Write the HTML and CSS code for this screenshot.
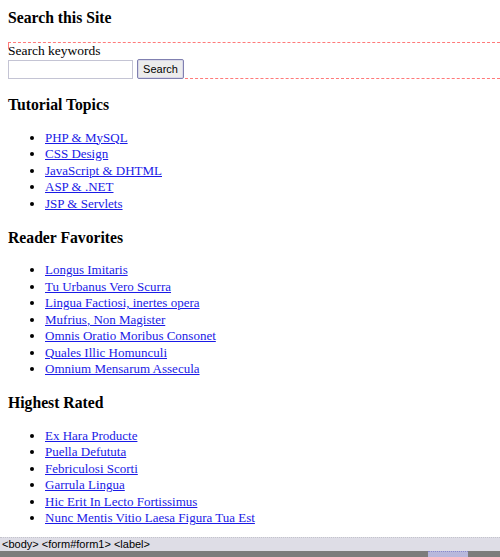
FILE: index.html
```html
<!DOCTYPE html>
<html>
<head>
<meta charset="utf-8">
<link rel="stylesheet" href="styles.css">
</head>
<body>
<main class="page">
  <h3 class="head first">Search this Site</h3>
  <form class="search" id="form1">
    <label class="lbl">Search keywords</label>
    <div class="row">
      <input class="field" type="text">
      <button class="btn" type="button">Search</button>
      <span class="tail"></span>
    </div>
  </form>
  <h3 class="head">Tutorial Topics</h3>
  <ul class="list">
    <li><a href="#">PHP &amp; MySQL</a></li>
    <li><a href="#">CSS Design</a></li>
    <li><a href="#">JavaScript &amp; DHTML</a></li>
    <li><a href="#">ASP &amp; .NET</a></li>
    <li><a href="#">JSP &amp; Servlets</a></li>
  </ul>
  <h3 class="head">Reader Favorites</h3>
  <ul class="list">
    <li><a href="#">Longus Imitaris</a></li>
    <li><a href="#">Tu Urbanus Vero Scurra</a></li>
    <li><a href="#">Lingua Factiosi, inertes opera</a></li>
    <li><a href="#">Mufrius, Non Magister</a></li>
    <li><a href="#">Omnis Oratio Moribus Consonet</a></li>
    <li><a href="#">Quales Illic Homunculi</a></li>
    <li><a href="#">Omnium Mensarum Assecula</a></li>
  </ul>
  <h3 class="head">Highest Rated</h3>
  <ul class="list">
    <li><a href="#">Ex Hara Producte</a></li>
    <li><a href="#">Puella Defututa</a></li>
    <li><a href="#">Febriculosi Scorti</a></li>
    <li><a href="#">Garrula Lingua</a></li>
    <li><a href="#">Hic Erit In Lecto Fortissimus</a></li>
    <li><a href="#">Nunc Mentis Vitio Laesa Figura Tua Est</a></li>
  </ul>
</main>
<footer class="status">
  <div class="tags">&lt;body&gt; &lt;form#form1&gt; &lt;label&gt;</div>
  <div class="bottom"><span class="chip"></span></div>
</footer>
</body>
</html>
```

FILE: styles.css
```css
html, body {
  margin: 0;
  padding: 0;
  height: 100%;
}
body {
  display: flex;
  flex-direction: column;
  overflow: hidden;
  background: #fff;
  font-family: "Liberation Serif", "Times New Roman", serif;
  font-size: 13px;
  color: #000;
}
.page {
  flex: 1;
  min-height: 0;
  overflow: hidden;
  padding: 9px 0 0 8px;
}
.head {
  font-size: 15.7px;
  font-weight: bold;
  margin: 16.5px 0 16.5px;
  line-height: 17px;
}
.head.first {
  margin-top: 0;
  margin-bottom: 16px;
}
.search {
  margin: 0 0 17px 0;
  border-top: 1px dashed #ff7a7a;
  position: relative;
}
.search::before {
  content: "";
  position: absolute;
  left: 0;
  top: 0;
  height: 6px;
  border-left: 1px dashed #ff7a7a;
}
.lbl {
  display: block;
  font-size: 13.5px;
  line-height: 15px;
}
.row {
  display: flex;
  align-items: flex-end;
}
.field {
  width: 125px;
  height: 19px;
  box-sizing: border-box;
  border: 1px solid #c4c4d4;
  margin: 2px 0 0 0;
  padding: 0;
  background: #fff;
}
.btn {
  margin: 0 0 0 4px;
  height: 20px;
  width: 47px;
  padding: 0;
  font-family: "Liberation Sans", Arial, sans-serif;
  font-size: 11px;
  color: #000;
  background: #ececec;
  border: 1px solid #8080b0;
  border-radius: 2px;
  box-shadow: inset 0 0 0 1px #d8d8e8;
}
.tail {
  flex: 1;
  border-bottom: 1px dashed #ff7a7a;
  margin-left: 1px;
}
.list {
  margin: 0;
  padding-left: 37px;
  line-height: 16.5px;
}
.list a {
  color: #1a1ae6;
  text-decoration: underline;
}
.status {
  flex: none;
  font-family: "Liberation Sans", Arial, sans-serif;
  font-size: 11px;
}
.tags {
  background: #dedde6;
  border-top: 1px dotted #c4c4cc;
  height: 13px;
  line-height: 13px;
  padding-left: 2px;
  color: #000;
}
.bottom {
  background: #7c7c7c;
  height: 6px;
  position: relative;
}
.chip {
  position: absolute;
  left: 428px;
  top: 0;
  width: 40px;
  height: 6px;
  background: #b8b8dc;
  border-top: 1px dotted #8888cc;
  box-sizing: border-box;
}
```
